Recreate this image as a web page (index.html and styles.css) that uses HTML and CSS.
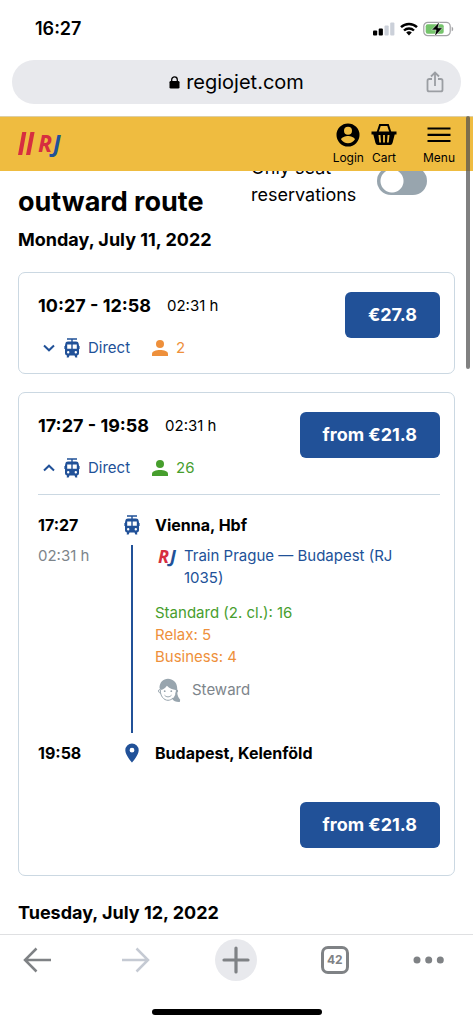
FILE: index.html
```html
<!DOCTYPE html>
<html lang="en">
<head>
<meta charset="utf-8">
<meta name="viewport" content="width=device-width, initial-scale=1">
<title>RegioJet – outward route</title>
<link rel="stylesheet" href="styles.css">
</head>
<body>
<svg class="sprite" aria-hidden="true">
  <symbol id="train" viewBox="0 0 16 20">
    <path fill="none" stroke="currentColor" stroke-width="1.400" d="M3 1h10M8 1v3"/>
    <path fill="currentColor" fill-rule="evenodd" d="M4 3.400h8c1.600 0 2.400.8 2.600 2.200L15 7.500v7.500c0 1.500-.8 2.400-2 2.600l.3 1.900h-2l-.8-1.900h-5l-.8 1.900h-2l.3-1.900c-1.200-.2-2-1.100-2-2.600V7.500l.4-1.900C1.600 4.200 2.400 3.400 4 3.400zM3.200 6.500v4.300h4.100V6.500zM8.700 6.500v4.300h4.100V6.500zM4.200 13a1.200 1.200 0 1 0 0 2.400 1.200 1.200 0 0 0 0-2.400zM11.800 13a1.200 1.200 0 1 0 0 2.400 1.200 1.200 0 0 0 0-2.400z"/>
    <path fill="currentColor" d="M.4 8h1v3h-1zM14.600 8h1v3h-1z"/>
  </symbol>
  <symbol id="person" viewBox="0 0 16 16">
    <circle cx="8" cy="4" r="4" fill="currentColor"/>
    <path fill="currentColor" d="M0 16v-2.200C0 11.200 4 10 8 10s8 1.200 8 3.800V16z"/>
  </symbol>
</svg>

<div class="status">
  <span class="clock">16:27</span>
  <span class="indicators">
    <svg width="22" height="14" viewBox="0 0 22 14"><rect x="0" y="8.500" width="4.200" height="5" rx="1"/><rect x="5.700" y="6.500" width="4.200" height="7" rx="1"/><g fill="#cbd0d9"><rect x="11.500" y="3.500" width="4.200" height="10" rx="1"/><rect x="17.200" y=".5" width="4.200" height="13" rx="1"/></g></svg>
    <svg width="18" height="14" viewBox="0 0 18 14"><g fill="none" stroke="#000" stroke-width="2.400"><path d="M1 5.200a11.500 11.500 0 0 1 16 0M4 8.500a7.300 7.300 0 0 1 10 0"/></g><path d="M6.200 10.600a4 4 0 0 1 5.600 0L9 13.500z"/></svg>
    <svg width="31" height="16" viewBox="0 0 31 16"><rect x=".8" y="1.300" width="26.400" height="13.400" rx="4" fill="#fff" stroke="#a3a3a6" stroke-width="1.200"/><rect x="2.700" y="3.200" width="18" height="9.600" rx="2" fill="#75c46b"/><path d="M28.700 5.700c2 .6 2 4 0 4.600z" fill="#a3a3a6"/><path d="M16.500.8 8.600 8.900h4.500l-1.500 6.600 8-8.700h-4.700z" stroke="#fff" stroke-width=".5"/></svg>
  </span>
</div>

<div class="address">
  <span class="site">
    <svg width="11" height="13" viewBox="0 0 11 13"><rect x=".5" y="5" width="10" height="7.500" rx="1.300"/><path d="M2.700 5.500V3.700a2.800 2.800 0 0 1 5.600 0v1.800" fill="none" stroke="#000" stroke-width="1.300"/></svg>
    regiojet.com
  </span>
  <button class="share" aria-label="Share">
    <svg width="18" height="22" viewBox="0 0 18 22" fill="none" stroke="#9b9ea3" stroke-width="1.800"><path d="M6 8H3.200Q1.500 8 1.500 9.700v9Q1.500 20.400 3.200 20.400h11.600q1.700 0 1.700-1.700v-9Q16.500 8 14.800 8H12M9 15V1.800M5 5.500l4-4 4 4"/></svg>
  </button>
</div>

<header class="header">
  <a class="logo" href="#" aria-label="RegioJet">
    <svg width="17" height="23" viewBox="0 0 17 23" fill="#d62e40"><path d="M4.200 0h4.200L4.200 23H0zM12.400 0h4.200l-4.400 23H8z"/></svg>
    <span class="rj">R<span class="j">J</span></span>
  </a>
  <nav class="nav">
    <a href="#"><svg width="24" height="24" viewBox="0 0 24 24"><path fill-rule="evenodd" d="M12 .5a11.500 11.500 0 1 0 0 23 11.500 11.500 0 0 0 0-23zM12 3.800a4 4 0 1 1 0 8 4 4 0 0 1 0-8zM12 20.300a8.300 8.300 0 0 1-6.900-3.700c0-2.300 4.600-3.500 6.900-3.500s6.900 1.200 6.900 3.500a8.300 8.300 0 0 1-6.900 3.700z"/></svg>Login</a>
    <a href="#"><svg width="26" height="24" viewBox="0 0 26 24"><path fill="none" stroke="#000" stroke-width="2" d="M6.500 9.500 9 2h8l2.500 7.500"/><path fill-rule="evenodd" d="M.5 8.500h25v3h-1.800L21.500 20q-.5 2-2.500 2H7q-2 0-2.500-2L2.300 11.500H.5zM7.500 12l.8 7.500h1.700L9.400 12zM12.100 12v7.500h1.800V12zM16.600 12l-.6 7.500h1.700l.8-7.500z"/></svg>Cart</a>
    <button class="menu"><svg width="24" height="24" viewBox="0 0 24 24" stroke="#000" stroke-width="2.200"><path d="M.5 5.500h23M.5 11.800h23M.5 18h23"/></svg>Menu</button>
  </nav>
</header>

<main class="results">
  <div class="heading">
    <h1>outward route</h1>
    <label class="seat"><span>Only seat reservations</span><input type="checkbox" role="switch"></label>
  </div>
  <h2>Monday, July 11, 2022</h2>

  <article class="card">
    <div class="summary">
      <div class="info">
        <div class="times"><h3>10:27 - 12:58</h3><span>02:31 h</span></div>
        <div class="facts">
          <button class="toggle"><svg class="chev" viewBox="0 0 12 8"><path d="m1 1.500 5 4.800 5-4.800"/></svg><svg class="train"><use href="#train"/></svg>Direct</button>
          <span class="seats few"><svg class="person"><use href="#person"/></svg>2</span>
        </div>
      </div>
      <button class="price">€27.8</button>
    </div>
  </article>

  <article class="card">
    <div class="summary">
      <div class="info">
        <div class="times"><h3>17:27 - 19:58</h3><span>02:31 h</span></div>
        <div class="facts">
          <button class="toggle"><svg class="chev" viewBox="0 0 12 8"><path d="m1 6.500 5-4.800 5 4.800"/></svg><svg class="train"><use href="#train"/></svg>Direct</button>
          <span class="seats many"><svg class="person"><use href="#person"/></svg>26</span>
        </div>
      </div>
      <button class="price">from €21.8</button>
    </div>
    <div class="trip">
      <b>17:27</b>
      <svg class="train"><use href="#train"/></svg>
      <b class="place">Vienna, Hbf</b>

      <span class="duration">02:31 h</span>
      <span class="line"></span>
      <div class="leg">
        <a class="service" href="#"><span class="rj small">R<span class="j">J</span></span><span>Train Prague — Budapest (RJ 1035)</span></a>
        <ul class="classes">
          <li class="many">Standard (2. cl.): 16</li>
          <li class="few">Relax: 5</li>
          <li class="few">Business: 4</li>
        </ul>
        <div class="steward">
          <svg width="24" height="24" viewBox="0 0 24 24"><path fill="#98a5ae" d="M2.500 10C2.500 4.500 6.200.8 11 .8S20 4.300 20.200 10v4.500c.2 3.500 1.500 5.500 3 7.200l-.4 2.200c-3.300.3-6.300-1-7.600-3 2.500-1.800 3.700-4.800 3.700-8.900-3.200-.2-6.700-1.700-9-4.200-1.300 2-3.600 3.900-6.200 4.200z"/><g fill="none" stroke="#98a5ae" stroke-width="1"><path d="M3.300 12c-.1 6 3.500 10.300 7.700 10.300 2 0 3.700-1 5-2.300M3.300 11.500c-2.600-.4-2.300 3.500.5 3.700M18.800 11.500c2.700-.3 2.300 3.500-.5 3.700M7.500 17.200c2 2.200 5 2.200 7 0"/></g><g fill="#98a5ae"><circle cx="7.700" cy="13.200" r=".9"/><circle cx="14.300" cy="13.200" r=".9"/></g></svg>
          Steward
        </div>
      </div>

      <b>19:58</b>
      <svg class="pin" viewBox="0 0 14 20"><path fill="currentColor" fill-rule="evenodd" d="M7 .5A6.700 6.700 0 0 0 .3 7.200C.3 12 7 19.500 7 19.500s6.700-7.500 6.700-12.300A6.700 6.700 0 0 0 7 .5zM7 4.800a2.400 2.400 0 1 1 0 4.800 2.400 2.400 0 0 1 0-4.800z"/></svg>
      <b class="place">Budapest, Kelenföld</b>
    </div>
    <div class="buy"><button class="price">from €21.8</button></div>
  </article>

  <h2>Tuesday, July 12, 2022</h2>
</main>
<div class="scrollbar"></div>

<footer class="browser">
  <div class="tools">
    <button aria-label="Back"><svg width="28" height="26" viewBox="0 0 28 26" fill="none" stroke="#7f8285" stroke-width="2.500"><path d="M28 13H2M13.500 1.500 2 13l11.500 11.500"/></svg></button>
    <button aria-label="Forward"><svg width="28" height="26" viewBox="0 0 28 26" fill="none" stroke="#c5cad3" stroke-width="2.500"><path d="M0 13h26M14.500 1.500 26 13 14.500 24.500"/></svg></button>
    <button class="new" aria-label="New tab"><svg width="28" height="28" viewBox="0 0 28 28" stroke="#7f8285" stroke-width="3.200" stroke-linecap="round"><path d="M14 2v24M2 14h24"/></svg></button>
    <button aria-label="Tabs"><span class="tabs">42</span></button>
    <button class="more" aria-label="More"><svg width="32" height="8" viewBox="0 0 32 8" fill="#7f8285"><circle cx="4" cy="4" r="3.500"/><circle cx="15.700" cy="4" r="3.500"/><circle cx="27.300" cy="4" r="3.500"/></svg></button>
  </div>
  <div class="home"></div>
</footer>
</body>
</html>
```
FILE: styles.css
```css
* { box-sizing: border-box; }
body {
  margin: 0;
  height: 100vh;
  display: flex;
  flex-direction: column;
  position: relative;
  overflow: hidden;
  background: #fff;
  color: #000;
  font: 15px/22px Inter, "Liberation Sans", sans-serif;
}
h1, h2, h3, ul { margin: 0; padding: 0; list-style: none; }
a { color: inherit; text-decoration: none; }
button { border: 0; padding: 0; background: none; color: inherit; font: inherit; cursor: pointer; }
svg { display: block; flex: none; }
.sprite { position: absolute; width: 0; height: 0; }

.status {
  display: flex;
  justify-content: space-between;
  align-items: center;
  height: 58px;
  padding: 0 19px 0 35px;
  flex: none;
}
.clock { font-size: 18px; font-weight: 600; }
.indicators { display: flex; align-items: center; gap: 5px; }

.address {
  display: flex;
  align-items: center;
  flex: none;
  height: 44px;
  margin: 2px 12px 12px;
  padding: 0 17px 0 35px;
  border-radius: 22px;
  background: #e8e9ed;
}
.site { flex: 1; display: flex; align-items: center; justify-content: center; gap: 6px; font-size: 20px; }

.header {
  display: flex;
  justify-content: space-between;
  position: relative;
  z-index: 1;
  flex: none;
  height: 55px;
  padding: 6px 18px 0;
  border-top: 1px solid #dccfa6;
  background: #efbc40;
}
.logo { display: flex; align-items: center; height: 40px; gap: 3px; }
.rj { display: flex; gap: 1px; font: italic 700 23px/24px "Open Sans", sans-serif; color: #d62e40; }
.j { color: #215198; }
.rj.small { font-size: 18px; line-height: 22px; }
.nav { display: flex; gap: 7px; font-size: 12px; line-height: 22px; }
.nav a, .menu { display: flex; flex-direction: column; align-items: center; }
.menu { margin-left: 19px; line-height: 22px; }

.results { flex: 1; min-height: 0; overflow: hidden; padding: 0 18px; }
.heading { display: flex; justify-content: space-between; align-items: flex-end; margin-top: -17px; padding-right: 28px; }
h1 { font-size: 27px; line-height: 32px; margin-bottom: -10px; }
.seat { display: flex; align-items: center; gap: 16px; width: 176px; font-size: 18px; line-height: 27px; }
.seat span { flex: 1; }
.seat input {
  appearance: none;
  flex: none;
  width: 50px;
  height: 28px;
  margin: 0;
  border-radius: 14px;
  background: radial-gradient(circle at 15px 14px, #fff 11px, #98a5ae 12px);
}
h2 { font-size: 18px; line-height: 26px; margin: 19px 0; }

.card { border: 1px solid #cbd8e2; border-radius: 7px; padding: 19px 14px 12px 19px; }
.card + .card { margin-top: 18px; padding-bottom: 27px; }
.summary { display: flex; justify-content: space-between; align-items: flex-start; }
.info { display: flex; flex-direction: column; gap: 15px; }
.times { display: flex; align-items: center; gap: 16px; height: 28px; }
h3 { font-size: 18px; line-height: 28px; }
.facts { display: flex; align-items: center; gap: 22px; height: 26px; }
.toggle, .seats { display: flex; align-items: center; gap: 8px; }
.toggle { padding-left: 5px; color: #215198; }
.chev { width: 12px; height: 8px; margin-right: 1px; fill: none; stroke: currentColor; stroke-width: 2; }
.train { width: 16px; height: 20px; color: #215198; }
.person { width: 16px; height: 16px; }
.few { color: #ee903b; }
.many { color: #479e2d; }
.price {
  height: 46px;
  padding: 0 23px;
  border-radius: 6px;
  background: #215198;
  color: #fff;
  font-size: 18px;
  font-weight: 700;
}

.trip {
  display: grid;
  grid-template-columns: 82px 24px 1fr;
  row-gap: 9px;
  justify-items: start;
  margin-top: 13px;
  padding-top: 19px;
  border-top: 1px solid #cbd8e2;
}
.trip b { font-size: 16px; }
.trip .train, .pin { justify-self: center; align-self: center; }
.pin { width: 14px; height: 20px; color: #215198; }
.duration { color: #7d858b; }
.line { justify-self: center; width: 2px; background: #215198; }
.place, .leg { margin-left: 11px; }
.leg { padding-bottom: 31px; }
.service { display: flex; gap: 8px; padding-left: 3px; color: #215198; max-width: 240px; }
.classes { margin: 13px 0 10px; }
.steward { display: flex; align-items: center; gap: 11px; padding-left: 2px; color: #7d858b; }
.buy { display: flex; justify-content: flex-end; margin-top: 38px; }
.card + h2 { margin-top: 24px; }

.scrollbar { position: absolute; z-index: 2; top: 116px; right: 3px; width: 4px; height: 253px; border-radius: 2px; background: #505050b8; }

.browser { flex: none; height: 90px; border-top: 1px solid #dfe0e2; background: #fff; }
.tools { display: flex; justify-content: space-between; align-items: center; height: 50px; padding: 0 28px 0 16px; }
.tools button { display: flex; align-items: center; justify-content: center; width: 42px; height: 42px; }
.tools .more { width: 32px; }
.tools .new { border-radius: 50%; background: #e8e9ed; }
.tabs { width: 28px; height: 28px; border: 3px solid #7f8285; border-radius: 7px; color: #7f8285; font-size: 12px; font-weight: 700; line-height: 22px; text-align: center; }
.home { width: 170px; height: 6px; margin: 24px auto 0; border-radius: 3px; background: #000; }
```
